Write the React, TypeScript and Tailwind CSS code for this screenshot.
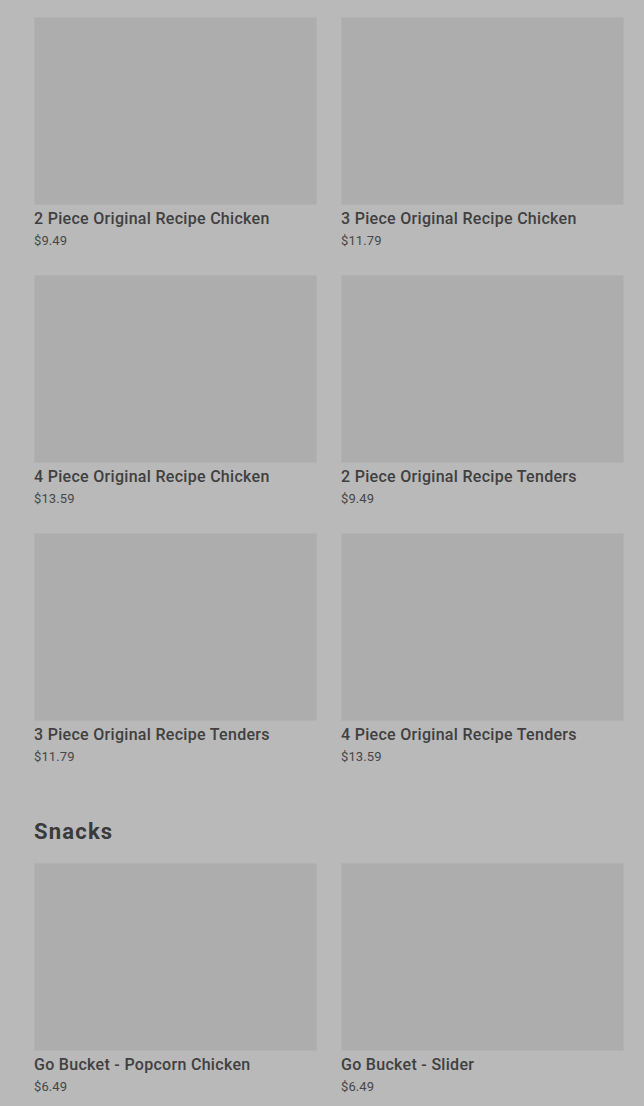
import React from "react";

type Item = { name: string; price: string };

const chicken: Item[] = [
  { name: "2 Piece Original Recipe Chicken", price: "$9.49" },
  { name: "3 Piece Original Recipe Chicken", price: "$11.79" },
  { name: "4 Piece Original Recipe Chicken", price: "$13.59" },
  { name: "2 Piece Original Recipe Tenders", price: "$9.49" },
  { name: "3 Piece Original Recipe Tenders", price: "$11.79" },
  { name: "4 Piece Original Recipe Tenders", price: "$13.59" },
];

const snacks: Item[] = [
  { name: "Go Bucket - Popcorn Chicken", price: "$6.49" },
  { name: "Go Bucket - Slider", price: "$6.49" },
];

function Card({ item }: { item: Item }) {
  return (
    <div className="flex flex-col">
      <div className="h-[188px] bg-[#adadad] border border-[#b2b2b2]" />
      <div className="mt-[3px] text-[16px] leading-[22px] font-medium text-[#404040] tracking-[0.3px]">
        {item.name}
      </div>
      <div className="mt-[2px] text-[13px] leading-[18px] text-[#474747] tracking-[0.1px]">
        {item.price}
      </div>
    </div>
  );
}

export default function App() {
  return (
    <div className="w-[644px] h-[1106px] overflow-hidden bg-[#b9b9b9] pl-[34px] pr-[20px] pt-[17px] font-['Roboto','Noto_Sans',sans-serif]">
      <div className="grid grid-cols-2 gap-x-[24px] gap-y-[25px]">
        {chicken.map((it) => (
          <Card key={it.name} item={it} />
        ))}
      </div>
      <h2 className="mt-[51px] mb-[16px] text-[22px] leading-[30px] font-bold text-[#3a3a3a] tracking-[1.2px]">
        Snacks
      </h2>
      <div className="grid grid-cols-2 gap-x-[24px] gap-y-[25px]">
        {snacks.map((it) => (
          <Card key={it.name} item={it} />
        ))}
      </div>
    </div>
  );
}
